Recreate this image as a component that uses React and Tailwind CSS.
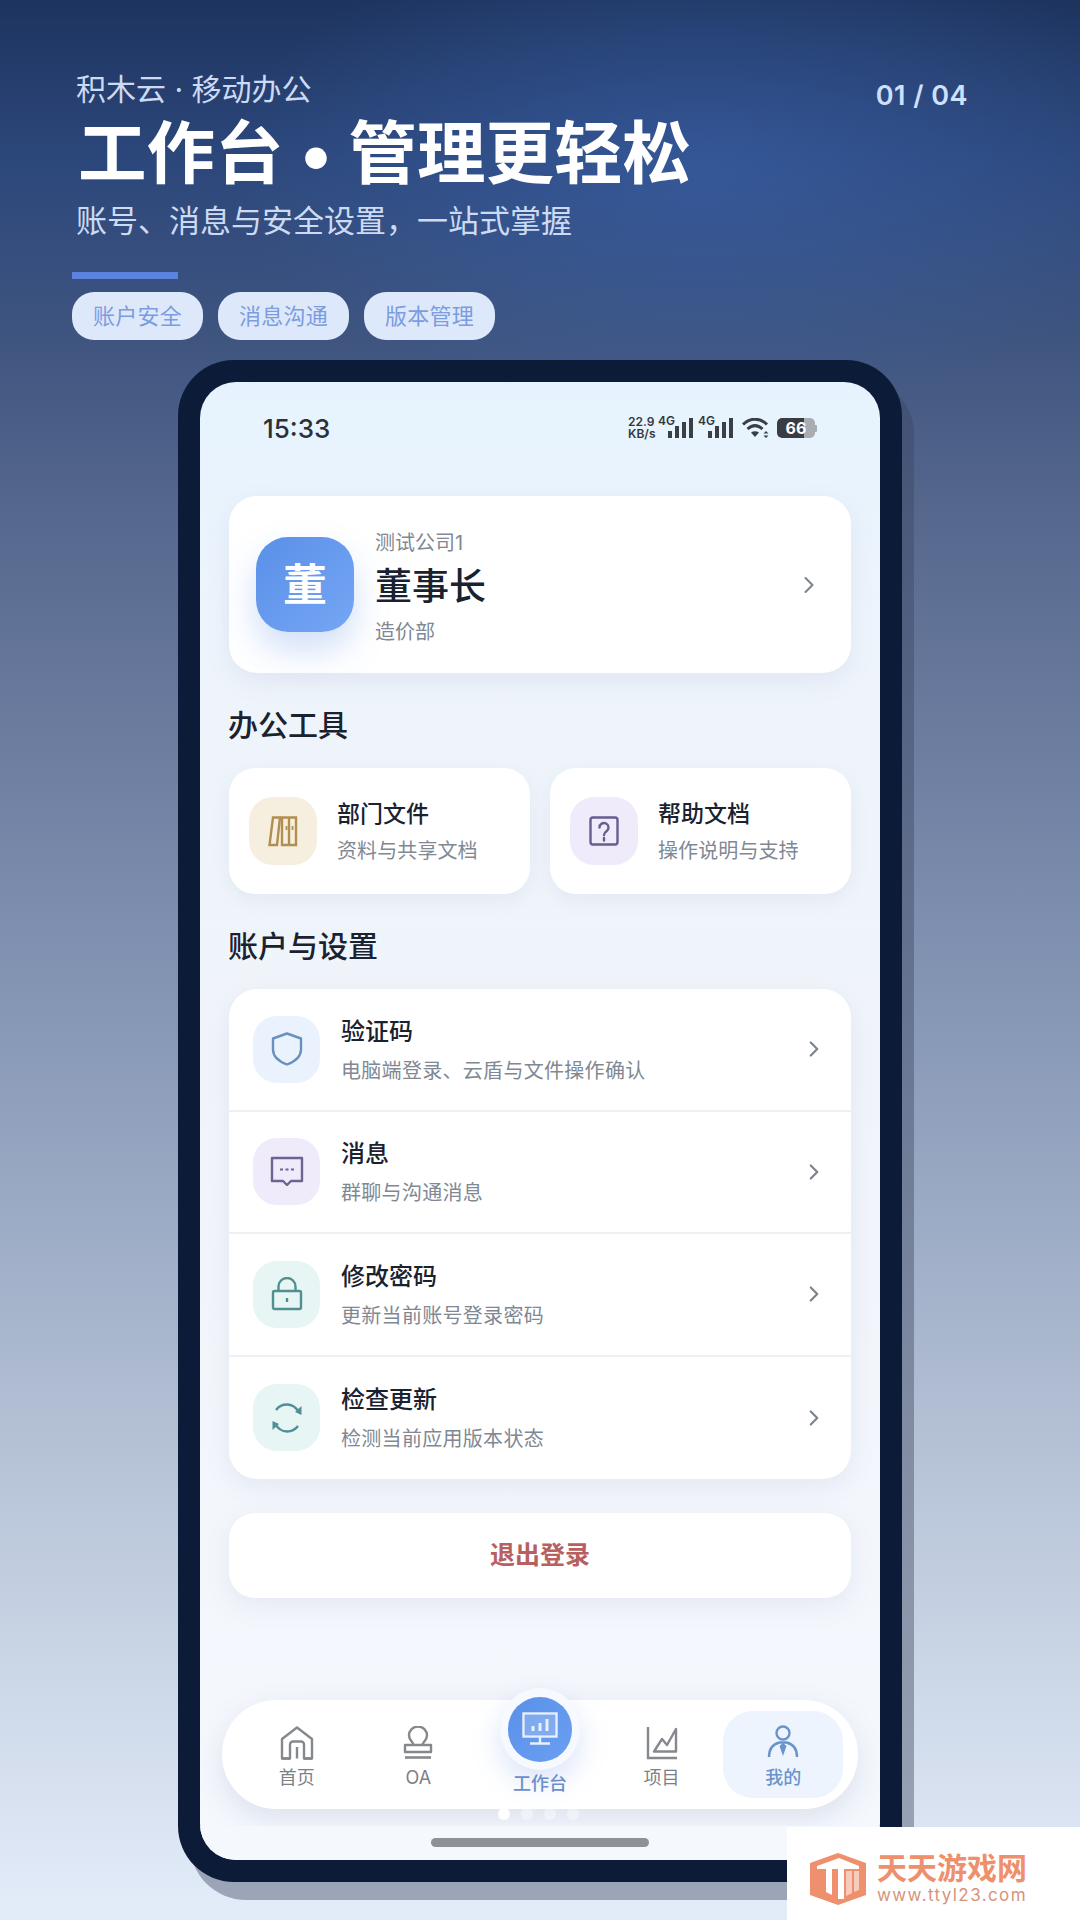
import { ChevronRight } from 'lucide-react'

const FONT = "font-['Inter','Noto_Sans_CJK_SC',sans-serif]"

const CHIPS = ['账户安全', '消息沟通', '版本管理']

function BooksIcon() {
  return (
    <svg width="32" height="32" viewBox="0 0 32 32" fill="none" stroke="#b08f50" strokeWidth="2.400">
      <path d="M6 2.500h7L10 30H2.500z" />
      <path d="M15 2.500h7V30h-7zM22 2.500h7V30h-7z" />
      <path d="M19.500 11v4M25.500 11v4" strokeWidth="1.800" />
    </svg>
  )
}

function HelpIcon() {
  return (
    <svg width="30" height="30" viewBox="0 0 30 30" fill="none" stroke="#665e8f" strokeWidth="2.400">
      <rect x="1.500" y="1.500" width="27" height="27" rx="2.500" />
      <path d="M10.500 11.500a4.500 4.500 0 1 1 7 3.700c-1.500 1-2.500 1.800-2.500 3.800" strokeLinecap="round" />
      <path d="M15 22v2.500" strokeLinecap="round" />
    </svg>
  )
}

function ShieldIcon() {
  return (
    <svg width="32" height="34" viewBox="0 0 32 34" fill="none" stroke="#6a90bd" strokeWidth="2.400" strokeLinejoin="round">
      <path d="M16 1.500 30 6.500v11c0 7-6 12-14 15-8-3-14-8-14-15v-11z" />
    </svg>
  )
}

function ChatIcon() {
  return (
    <svg width="34" height="32" viewBox="0 0 34 32" fill="none" stroke="#6d648f" strokeWidth="2.400">
      <path d="M2 2h30v23H21l-4 4-4-4H2z" strokeLinejoin="round" />
      <path d="M10 13.500h3M15.500 13.500h3M21 13.500h3" strokeWidth="2" />
    </svg>
  )
}

function LockIcon() {
  return (
    <svg width="32" height="34" viewBox="0 0 32 34" fill="none" stroke="#4f9190" strokeWidth="2.400">
      <rect x="2" y="14" width="28" height="18" rx="1.500" />
      <path d="M7.500 14V9.500a8.500 8.500 0 0 1 17 0V14" />
      <path d="M16 21v4" />
    </svg>
  )
}

function RefreshIcon() {
  return (
    <svg width="32" height="32" viewBox="0 0 32 32" fill="none" stroke="#4f8f97" strokeWidth="2.400">
      <path d="M5 8C8 4 11.500 2.500 16 2.500c5 0 9 2.500 12 8" />
      <path d="M27 24c-3 4-6.500 5.500-11 5.500-5 0-9-2.500-12-8" />
      <path d="M30.500 4v9l-6.500-3z" fill="#4f8f97" stroke="none" />
      <path d="M1.500 28V19l6.500 3z" fill="#4f8f97" stroke="none" />
    </svg>
  )
}

function HomeIcon() {
  return (
    <svg width="34" height="34" viewBox="0 0 34 34" fill="none" stroke="#85888c" strokeWidth="2.400">
      <path d="M2 32.500V13L17 1.500 32 13v19.500H24V18.500a3 3 0 0 0-3-3H13a3 3 0 0 0-3 3v14z" strokeLinejoin="round" />
      <path d="M17 21v11.500" />
      <path d="M2 32.500h8M24 32.500h8" />
    </svg>
  )
}

function StampIcon() {
  return (
    <svg width="30" height="34" viewBox="0 0 30 34" fill="none" stroke="#85888c" strokeWidth="2.400">
      <path d="M10.500 19c0-3-4.500-4.500-4.500-9.500a9 9 0 0 1 18 0c0 5-4.500 6.500-4.500 9.500" />
      <path d="M2 19h26v7H2z" strokeLinejoin="round" />
      <path d="M2 31.500h26" strokeWidth="2.600" />
    </svg>
  )
}

function ChartIcon() {
  return (
    <svg width="32" height="34" viewBox="0 0 32 34" fill="none" stroke="#85888c" strokeWidth="2.400">
      <path d="M2 1v31h29" />
      <path d="M8 25.500 16 13l5 6 9-16v22.500z" strokeLinejoin="round" />
    </svg>
  )
}

function PersonIcon() {
  return (
    <svg width="32" height="36" viewBox="0 0 32 36" fill="none" stroke="#6a93cc" strokeWidth="2.400">
      <circle cx="16" cy="8" r="6.500" />
      <path d="M2 32c0-8 4-13 10.500-14.500h7C26 19 30 24 30 32" />
      <path d="M16 18l3.500 3-3.500 10-3.500-10z" fill="#6a93cc" stroke="none" />
    </svg>
  )
}

function MonitorIcon() {
  return (
    <svg width="36" height="34" viewBox="0 0 36 34" fill="none" stroke="#e7f0fc" strokeWidth="2.400">
      <rect x="1.500" y="1.500" width="33" height="23" />
      <path d="M3 3h30v20H3z" fill="#a6c3f0" stroke="none" opacity=".45" />
      <path d="M11 14v5M18 11v8M25 7v12" strokeWidth="3" />
      <path d="M18 25v6M8 31.500h20" />
    </svg>
  )
}

function Bars() {
  return (
    <svg width="26" height="20" viewBox="0 0 26 20" fill="#3a3f45">
      <rect x="0" y="13" width="4" height="7" />
      <rect x="7" y="8" width="4" height="12" />
      <rect x="14" y="4" width="4" height="16" />
      <rect x="21" y="0" width="4" height="20" />
    </svg>
  )
}

function StatusIcons() {
  return (
    <div className="flex items-center text-[#32373d]">
      <div className="flex w-[30px] flex-col text-[12px] leading-[12px] font-semibold">
        <span>22.9</span>
        <span>KB/s</span>
      </div>
      <div className="relative flex h-[20px] w-[36px] justify-end">
        <span className="absolute -top-[3px] left-0 text-[12px] leading-[12px] font-semibold">4G</span>
        <Bars />
      </div>
      <div className="relative ml-[4px] flex h-[20px] w-[36px] justify-end">
        <span className="absolute -top-[3px] left-0 text-[12px] leading-[12px] font-semibold">4G</span>
        <Bars />
      </div>
      <svg className="ml-[8px]" width="28" height="20" viewBox="0 0 28 20" fill="none" stroke="#3a3f45" strokeWidth="3">
        <path d="M1 6.500C8-.5 18-.5 25 6.500M5.500 11c5-4.500 10-4.500 15 0" />
        <path d="M13 19l-4-4.500c2.500-1.800 5.500-1.800 8 0z" fill="#3a3f45" stroke="none" />
        <path d="M24 13l2.500 2.500h-5zM24 20l2.500-2.500h-5z" fill="#3a3f45" stroke="none" />
      </svg>
      <div className="relative ml-[7px] flex h-[20px] w-[38px] overflow-hidden rounded-[5px] bg-[#a9adb2]">
        <div className="flex h-full w-[27px] items-center justify-end rounded-l-[5px] bg-[#393d43]" />
        <span className="absolute inset-0 flex items-center justify-center text-[16px] font-bold text-white">66</span>
      </div>
      <div className="h-[7px] w-[2px] rounded-r-[1px] bg-[#a9adb2]" />
    </div>
  )
}

function ToolCard({ tile, icon, title, sub }) {
  return (
    <div className="flex h-[126px] items-center gap-[20px] rounded-[26px] bg-white pl-[20px] shadow-[0_6px_18px_rgba(120,140,180,0.1)]">
      <div className={`flex h-[68px] w-[68px] items-center justify-center rounded-[24px] ${tile}`}>{icon}</div>
      <div className="pt-[2px]">
        <div className="text-[23px] leading-[30px] font-medium text-[#1a2230]">{title}</div>
        <div className="mt-[8px] text-[20px] leading-[28px] tracking-[0.1px] text-[#7f8893]">{sub}</div>
      </div>
    </div>
  )
}

function ListRow({ tile, icon, title, sub, last }) {
  return (
    <div className={`flex h-[122.500px] items-center pl-[24px] pr-[24px] ${last ? '' : 'border-b-2 border-[#edf0f5]'}`}>
      <div className={`flex h-[67px] w-[67px] shrink-0 items-center justify-center rounded-[24px] ${tile}`}>{icon}</div>
      <div className="ml-[21px] flex-1 pt-[2px]">
        <div className="text-[24px] leading-[32px] font-medium text-[#1a2230]">{title}</div>
        <div className="mt-[9px] text-[20px] leading-[28px] tracking-[0.3px] text-[#7f8893]">{sub}</div>
      </div>
      <ChevronRight size={26} strokeWidth={2} className="text-[#7d838c]" />
    </div>
  )
}

function TabItem({ icon, label, active }) {
  return (
    <div className={`flex h-[87px] w-[120px] flex-col items-center rounded-[30px] pt-[14px] ${active ? 'bg-[#eef4fd]' : ''}`}>
      <div className="flex h-[36px] items-center justify-center">{icon}</div>
      <div className={`mt-[6px] text-[18px] leading-[22px] ${active ? 'font-medium text-[#6a93cc]' : 'text-[#7d8085]'}`}>{label}</div>
    </div>
  )
}

export default function App() {
  return (
    <div className={`relative h-[1920px] w-[1080px] overflow-hidden bg-[radial-gradient(ellipse_480px_240px_at_700px_170px,rgba(58,98,170,0.6),rgba(58,98,170,0)),linear-gradient(180deg,#1e345f_0px,#2c477b_160px,#3f5580_340px,#54668c_500px,#8a9bb9_1050px,#b0bdd2_1400px,#e2ebf8_1900px)] ${FONT}`}>
      {/* Header */}
      <div className="relative h-[360px] pl-[72px] pt-[69px]">
        <div className="absolute right-[112px] top-[78px] text-[27px] leading-[36px] font-semibold tracking-[0.5px] text-[#cfe0fb]">01 / 04</div>
        <div className="pl-[4px] text-[30px] leading-[40px] text-[#ccdaf3]">积木云 · 移动办公</div>
        <div className="mt-[7px] pl-[6px] text-[68.500px] leading-[76px] font-bold whitespace-nowrap text-white">工作台 • 管理更轻松</div>
        <div className="mt-[8px] pl-[4px] text-[31px] leading-[42px] text-[#ccdaf3]">{'账号、消息与安全设置\uFF0C一站式掌握'}</div>
        <div className="mt-[30px] h-[7px] w-[106px] bg-[#5b82de]" />
        <div className="mt-[13px] flex gap-[15px]">
          {CHIPS.map((chip) => (
            <div key={chip} className="flex h-[48px] w-[131px] items-center justify-center rounded-[22px] bg-[#dde9fb] text-[22px] tracking-[0.3px] text-[#7b9cdf]">
              {chip}
            </div>
          ))}
        </div>
      </div>

      {/* Phone */}
      <div className="ml-[178px] h-[1522px] w-[724px] rounded-[56px] bg-[#0c1b37] p-[22px] pb-0 shadow-[12px_18px_0_rgba(60,70,95,0.42)]">
        <div className="flex h-[1478px] w-[680px] flex-col overflow-hidden rounded-[36px] bg-[linear-gradient(180deg,#e6f3fe_0%,#eef4fb_18%,#f1f4fa_55%,#f5f8fd_100%)]">
          <div className="flex h-[92px] shrink-0 items-center justify-between px-[63px]">
            <span className="text-[26px] font-medium text-[#2c3138]">15:33</span>
            <StatusIcons />
          </div>

          <div className="mt-[22px] px-[29px]">
            {/* Profile */}
            <div className="flex h-[177px] items-center rounded-[28px] bg-white pl-[27px] pr-[28px] shadow-[0_8px_24px_rgba(120,140,180,0.12)]">
              <div className="flex h-[95px] w-[98px] items-center justify-center rounded-[32px] bg-[linear-gradient(135deg,#5a90e8,#75a6f5)] text-[44px] font-bold text-white shadow-[0_18px_34px_rgba(90,140,230,0.28)]">
                董
              </div>
              <div className="ml-[21px] flex-1 pt-[6px]">
                <div className="text-[20px] leading-[28px] text-[#7f8893]">测试公司1</div>
                <div className="mt-[6px] text-[37px] leading-[48px] font-medium text-[#1a2230]">董事长</div>
                <div className="mt-[7px] text-[20px] leading-[28px] text-[#7f8893]">造价部</div>
              </div>
              <ChevronRight size={28} strokeWidth={1.750} className="text-[#7d838c]" />
            </div>

            <div className="-ml-px mt-[34px] h-[36px] text-[30px] leading-[36px] font-medium text-[#1a2230]">办公工具</div>
            <div className="mt-[25px] grid grid-cols-2 gap-[20px]">
              <ToolCard tile="bg-[#f6efdf]" icon={<BooksIcon />} title="部门文件" sub="资料与共享文档" />
              <ToolCard tile="bg-[#efebfb]" icon={<HelpIcon />} title="帮助文档" sub="操作说明与支持" />
            </div>

            <div className="-ml-px mt-[33px] h-[36px] text-[30px] leading-[38px] font-medium text-[#1a2230]">账户与设置</div>
            <div className="mt-[26px] rounded-[28px] bg-white shadow-[0_8px_24px_rgba(120,140,180,0.12)]">
              <ListRow tile="bg-[#eaf3fd]" icon={<ShieldIcon />} title="验证码" sub="电脑端登录、云盾与文件操作确认" />
              <ListRow tile="bg-[#efebfb]" icon={<ChatIcon />} title="消息" sub="群聊与沟通消息" />
              <ListRow tile="bg-[#e7f5f5]" icon={<LockIcon />} title="修改密码" sub="更新当前账号登录密码" />
              <ListRow tile="bg-[#e7f5f5]" icon={<RefreshIcon />} title="检查更新" sub="检测当前应用版本状态" last />
            </div>

            <div className="mt-[34px] flex h-[85px] items-center justify-center rounded-[26px] bg-white text-[25px] font-bold text-[#b8605f] shadow-[0_8px_24px_rgba(120,140,180,0.12)]">
              退出登录
            </div>
          </div>

          {/* Tab bar */}
          <div className="relative mx-[22px] mt-[102px] grid h-[109px] w-[636px] shrink-0 grid-cols-5 justify-items-center rounded-[54px] bg-white px-[14px] py-[11px] shadow-[0_10px_28px_rgba(110,130,170,0.18)]">
            <TabItem icon={<HomeIcon />} label="首页" />
            <TabItem icon={<StampIcon />} label="OA" />
            <div className="-mt-[23px] flex flex-col items-center">
              <div className="flex h-[82px] w-[80px] items-center justify-center rounded-full bg-[#f6f9fe] shadow-[0_12px_28px_rgba(90,130,220,0.22)]">
                <div className="flex h-[65px] w-[64px] items-center justify-center rounded-full bg-[linear-gradient(135deg,#5a90e8,#6a9ff2)]">
                  <MonitorIcon />
                </div>
              </div>
              <div className="mt-[3px] text-[18px] leading-[22px] font-medium text-[#6a8fcb]">工作台</div>
            </div>
            <TabItem icon={<ChartIcon />} label="项目" />
            <TabItem icon={<PersonIcon />} label="我的" active />
            <div className="absolute -bottom-[11px] left-[276px] flex gap-[11px]">
              <span className="h-[12px] w-[12px] rounded-full bg-white" />
              <span className="h-[12px] w-[12px] rounded-full bg-white/40" />
              <span className="h-[12px] w-[12px] rounded-full bg-white/40" />
              <span className="h-[12px] w-[12px] rounded-full bg-white/40" />
            </div>
          </div>

          <div className="relative mt-[17px] flex h-[34px] shrink-0 justify-center bg-[#f5f8fc] pt-[12px]">
            <div className="h-[9px] w-[218px] rounded-full bg-[#8e9197]" />
          </div>
        </div>
      </div>

      {/* Watermark */}
      <div className="absolute bottom-0 right-0 flex h-[93px] w-[293px] items-start bg-white pl-[22px] pt-[26px]">
        <svg width="58" height="52" viewBox="0 0 58 52">
          <path d="M29 0 57 10v32L29 52 1 42V10z" fill="#ee8f6e" />
          <path d="M8 13 30 5l20 8v3H35v30h-6V16h-6v26l-6-3V16H8z" fill="#fff" />
          <path d="M37 18h6v22l-6 3zM45 18h5v19l-5 2z" fill="#fff" opacity=".55" />
        </svg>
        <div className="ml-[10px]">
          <div className="text-[30px] leading-[30px] font-bold whitespace-nowrap text-[#ee8f6e]">天天游戏网</div>
          <div className="mt-[3px] text-[17px] leading-[18px] tracking-[1.400px] whitespace-nowrap text-[#d8927a]">www.ttyl23.com</div>
        </div>
      </div>
    </div>
  )
}
